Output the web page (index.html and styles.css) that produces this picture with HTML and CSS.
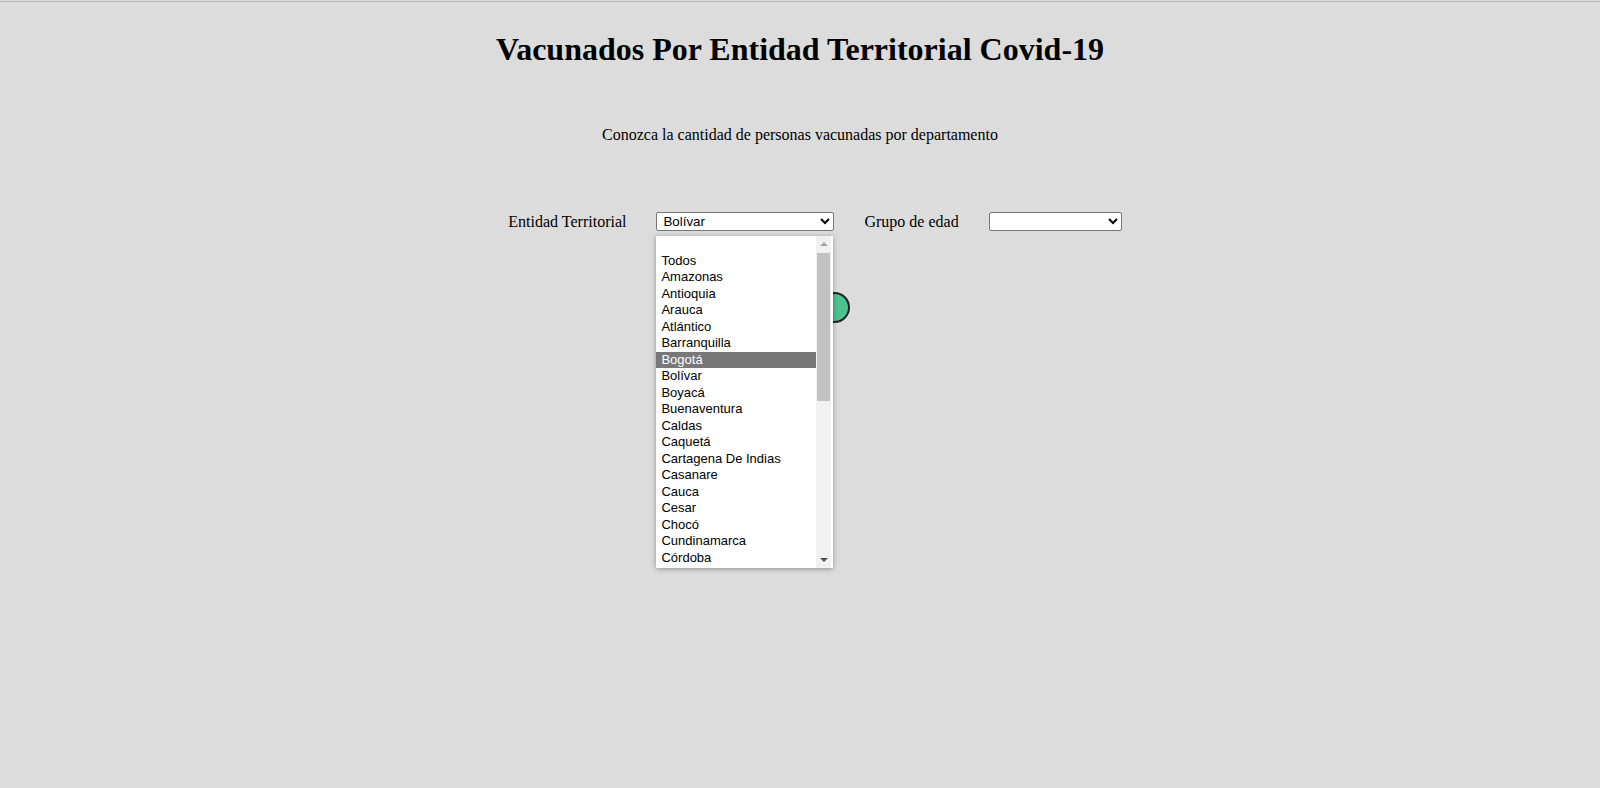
FILE: index.html
```html
<!DOCTYPE html>
<html lang="es">
<head>
<meta charset="utf-8">
<title>Vacunados Covid-19</title>
<link rel="stylesheet" href="styles.css">
</head>
<body>
<div class="topline"></div>
<h1 class="title">Vacunados Por Entidad Territorial Covid-19</h1>
<p class="subtitle">Conozca la cantidad de personas vacunadas por departamento</p>
<form class="filters">
  <label class="label" for="entidad">Entidad Territorial</label>
  <div class="select-wrap">
    <select id="entidad" class="select select-entidad">
      <option>Bolívar</option>
    </select>
    <div class="popup">
      <ul class="options">
        <li class="opt"></li>
        <li class="opt">Todos</li>
        <li class="opt">Amazonas</li>
        <li class="opt">Antioquia</li>
        <li class="opt">Arauca</li>
        <li class="opt">Atlántico</li>
        <li class="opt">Barranquilla</li>
        <li class="opt opt-hover">Bogotá</li>
        <li class="opt">Bolívar</li>
        <li class="opt">Boyacá</li>
        <li class="opt">Buenaventura</li>
        <li class="opt">Caldas</li>
        <li class="opt">Caquetá</li>
        <li class="opt">Cartagena De Indias</li>
        <li class="opt">Casanare</li>
        <li class="opt">Cauca</li>
        <li class="opt">Cesar</li>
        <li class="opt">Chocó</li>
        <li class="opt">Cundinamarca</li>
        <li class="opt">Córdoba</li>
      </ul>
      <div class="scrollbar">
        <span class="arrow arrow-up"></span>
        <span class="thumb"></span>
        <span class="arrow arrow-down"></span>
      </div>
    </div>
  </div>
  <label class="label" for="edad">Grupo de edad</label>
  <select id="edad" class="select select-edad">
    <option></option>
  </select>
</form>
<div class="actions">
  <button class="circle" type="button" aria-label="Consultar"></button>
</div>
</body>
</html>
```

FILE: styles.css
```css
html, body {
  margin: 0;
  padding: 0;
}
body {
  background: #dcdcdc;
  font-family: "Liberation Serif", "Times New Roman", serif;
  color: #000;
  height: 788px;
  overflow: hidden;
}
.topline {
  margin-top: 1px;
  height: 1px;
  background: #b9b9b9;
}
.title {
  margin: 29px 0 0;
  font-size: 32px;
  line-height: 37px;
  font-weight: bold;
  text-align: center;
}
.subtitle {
  margin: 58px 0 0;
  font-size: 16px;
  line-height: 18px;
  text-align: center;
}
.filters {
  margin-top: 68px;
  display: flex;
  justify-content: center;
  align-items: center;
  padding-left: 30px;
  height: 19px;
}
.label {
  font-size: 16px;
  line-height: 18px;
  margin-right: 30px;
}
.select-wrap {
  position: relative;
  margin-right: 30px;
}
.select {
  display: block;
  box-sizing: border-box;
  height: 19px;
  font-family: "Liberation Sans", Arial, sans-serif;
  font-size: 13.33px;
  background: #fff;
  border: 1px solid #767676;
  border-radius: 2px;
  padding: 0 0 0 2px;
  color: #000;
}
.select-entidad {
  width: 178px;
}
.select-edad {
  width: 133px;
}
.popup {
  position: absolute;
  left: 0;
  top: 24px;
  width: 177px;
  height: 332px;
  padding-right: 2px;
  box-sizing: border-box;
  background: #fff;
  box-shadow: 0 1px 5px rgba(0, 0, 0, 0.35);
  z-index: 5;
  display: flex;
  overflow: hidden;
}
.options {
  list-style: none;
  margin: 0;
  padding: 0;
  flex: 1;
  font-family: "Liberation Sans", Arial, sans-serif;
  font-size: 13px;
}
.opt {
  height: 16.5px;
  line-height: 16.5px;
  padding-left: 5px;
  white-space: nowrap;
  color: #000;
}
.opt-hover {
  background: #787878;
  color: #fff;
}
.scrollbar {
  position: relative;
  width: 15px;
  background: #f1f1f1;
}
.thumb {
  position: absolute;
  left: 1px;
  right: 1px;
  top: 17px;
  height: 148px;
  background: #c1c1c1;
}
.arrow {
  position: absolute;
  left: 50%;
  width: 0;
  height: 0;
  margin-left: -4px;
  border-left: 4px solid transparent;
  border-right: 4px solid transparent;
}
.arrow-up {
  top: 6px;
  border-bottom: 4px solid #a3a3a3;
}
.arrow-down {
  bottom: 6px;
  border-top: 4px solid #505050;
}
.actions {
  margin-top: 61px;
  display: flex;
  justify-content: center;
  padding-left: 68px;
}
.circle {
  width: 31px;
  height: 31px;
  border-radius: 50%;
  background: #4cc28f;
  border: 2px solid #222;
  padding: 0;
}
```
